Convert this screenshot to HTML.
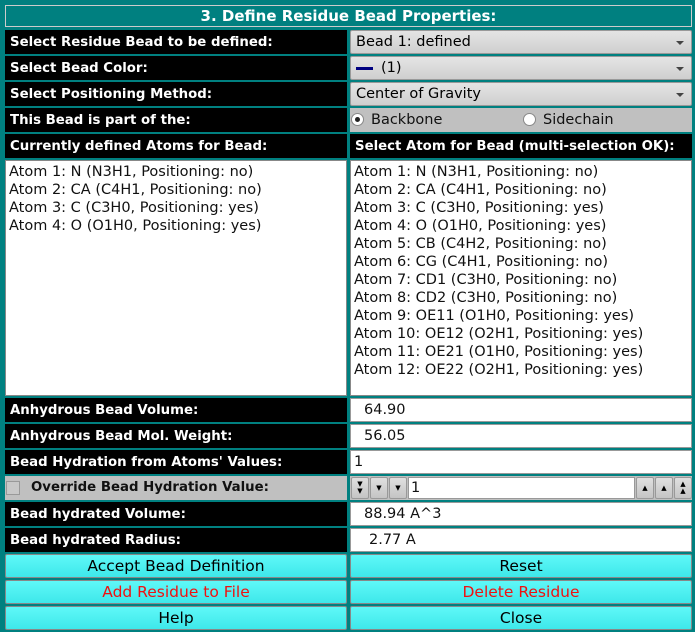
<!DOCTYPE html>
<html><head><style>
body{margin:0;width:695px;height:632px;background:#008080;position:relative;overflow:hidden;font-family:"DejaVu Sans","Liberation Sans",sans-serif;}
.a{position:absolute;box-sizing:border-box;}
.lbl{background:#000;color:#fff;font-weight:bold;font-size:13.3px;padding-left:5px;padding-top:2px;line-height:22px;height:24px;white-space:nowrap;}
.cmb{background:linear-gradient(#e4e4e4,#cfcfcf);border:1px solid #999;border-radius:2px;font-size:14.5px;line-height:23px;padding-left:5px;height:24px;color:#000;}
.cmb:after{content:"";position:absolute;right:7px;top:10px;border-left:4px solid transparent;border-right:4px solid transparent;border-top:4px solid #444;}
.inp{background:#fff;border:1px solid #999;font-size:14.5px;line-height:23px;height:24px;color:#111;}
.list{background:#fff;border:1px solid #888;font-size:14.5px;line-height:18px;padding:2px 3px;color:#111;}
.btn{background:linear-gradient(#5ff8f8,#3ee8ea);border:1px solid #888;border-radius:2px;font-family:"DejaVu Sans ExtraLight","DejaVu Sans",sans-serif;font-size:15.5px;text-align:center;line-height:23px;height:24px;color:#000;}
.red{color:#f01010;}
.sb{background:linear-gradient(#e0e0e0,#c4c4c4);border:1px solid #999;border-radius:2px;height:22px;top:477px;font-size:7px;text-align:center;line-height:20px;}
</style></head><body>
<div class="a" style="left:5px;top:5px;width:687px;height:22px;border:1px solid #ccc;background:#008080;color:#fff;font-weight:bold;font-size:15px;text-align:center;line-height:21px;">3. Define Residue Bead Properties:</div>

<div class="a lbl" style="left:5px;top:30px;width:342px;">Select Residue Bead to be defined:</div>
<div class="a cmb" style="left:350px;top:30px;width:342px;">Bead 1: defined</div>
<div class="a lbl" style="left:5px;top:56px;width:342px;">Select Bead Color:</div>
<div class="a cmb" style="left:350px;top:56px;width:342px;"><span style="display:inline-block;width:17px;height:3px;background:#000080;vertical-align:middle;margin-right:8px;"></span>(1)</div>
<div class="a lbl" style="left:5px;top:82px;width:342px;">Select Positioning Method:</div>
<div class="a cmb" style="left:350px;top:82px;width:342px;">Center of Gravity</div>
<div class="a lbl" style="left:5px;top:108px;width:342px;">This Bead is part of the:</div>
<div class="a" style="left:350px;top:108px;width:342px;height:24px;background:#c0c0c0;font-size:14.5px;line-height:25px;color:#111;">
 <span class="a" style="left:1px;top:5px;width:13px;height:13px;border-radius:50%;background:#fff;border:1px solid #888;"><span class="a" style="left:3px;top:3px;width:5px;height:5px;border-radius:50%;background:#222;"></span></span>
 <span class="a" style="left:21px;top:0;">Backbone</span>
 <span class="a" style="left:173px;top:5px;width:13px;height:13px;border-radius:50%;background:#fff;border:1px solid #888;"></span>
 <span class="a" style="left:193px;top:0;">Sidechain</span>
</div>
<div class="a lbl" style="left:5px;top:134px;width:342px;">Currently defined Atoms for Bead:</div>
<div class="a lbl" style="left:350px;top:134px;width:342px;">Select Atom for Bead (multi-selection OK):</div>

<div class="a list" style="left:5px;top:160px;width:342px;height:236px;">Atom 1: N (N3H1, Positioning: no)<br>Atom 2: CA (C4H1, Positioning: no)<br>Atom 3: C (C3H0, Positioning: yes)<br>Atom 4: O (O1H0, Positioning: yes)</div>
<div class="a list" style="left:350px;top:160px;width:342px;height:236px;">Atom 1: N (N3H1, Positioning: no)<br>Atom 2: CA (C4H1, Positioning: no)<br>Atom 3: C (C3H0, Positioning: yes)<br>Atom 4: O (O1H0, Positioning: yes)<br>Atom 5: CB (C4H2, Positioning: no)<br>Atom 6: CG (C4H1, Positioning: no)<br>Atom 7: CD1 (C3H0, Positioning: no)<br>Atom 8: CD2 (C3H0, Positioning: no)<br>Atom 9: OE11 (O1H0, Positioning: yes)<br>Atom 10: OE12 (O2H1, Positioning: yes)<br>Atom 11: OE21 (O1H0, Positioning: yes)<br>Atom 12: OE22 (O2H1, Positioning: yes)</div>

<div class="a lbl" style="left:5px;top:398px;width:342px;">Anhydrous Bead Volume:</div>
<div class="a inp" style="left:350px;top:398px;width:342px;padding-left:13px;">64.90</div>
<div class="a lbl" style="left:5px;top:424px;width:342px;">Anhydrous Bead Mol. Weight:</div>
<div class="a inp" style="left:350px;top:424px;width:342px;padding-left:13px;">56.05</div>
<div class="a lbl" style="left:5px;top:450px;width:342px;">Bead Hydration from Atoms' Values:</div>
<div class="a inp" style="left:350px;top:450px;width:342px;padding-left:3px;">1</div>
<div class="a" style="left:5px;top:476px;width:342px;height:24px;background:#c0c0c0;font-weight:bold;font-size:13.3px;line-height:24px;color:#111;padding-left:26px;">Override Bead Hydration Value:</div>
<div class="a" style="left:6px;top:481px;width:14px;height:14px;border:1px solid #999;background:#c8c8c8;"></div>
<div class="a" style="left:350px;top:476px;width:342px;height:24px;background:#c0c0c0;"></div>
<div class="a sb" style="left:351px;width:18px;line-height:7px;padding-top:3px;">&#9660;<br>&#9660;</div>
<div class="a sb" style="left:370px;width:18px;">&#9660;</div>
<div class="a sb" style="left:389px;width:18px;">&#9660;</div>
<div class="a inp" style="left:408px;top:477px;width:227px;height:22px;line-height:21px;padding-left:2px;">1</div>
<div class="a sb" style="left:636px;width:18px;">&#9650;</div>
<div class="a sb" style="left:655px;width:18px;">&#9650;</div>
<div class="a sb" style="left:674px;width:18px;line-height:7px;padding-top:3px;">&#9650;<br>&#9650;</div>
<div class="a lbl" style="left:5px;top:502px;width:342px;">Bead hydrated Volume:</div>
<div class="a inp" style="left:350px;top:502px;width:342px;padding-left:13px;">88.94 A^3</div>
<div class="a lbl" style="left:5px;top:528px;width:342px;">Bead hydrated Radius:</div>
<div class="a inp" style="left:350px;top:528px;width:342px;padding-left:18px;">2.77 A</div>

<div class="a btn" style="left:5px;top:554px;width:342px;">Accept Bead Definition</div>
<div class="a btn" style="left:350px;top:554px;width:342px;">Reset</div>
<div class="a btn red" style="left:5px;top:580px;width:342px;">Add Residue to File</div>
<div class="a btn red" style="left:350px;top:580px;width:342px;">Delete Residue</div>
<div class="a btn" style="left:5px;top:606px;width:342px;">Help</div>
<div class="a btn" style="left:350px;top:606px;width:342px;">Close</div>
</body></html>
